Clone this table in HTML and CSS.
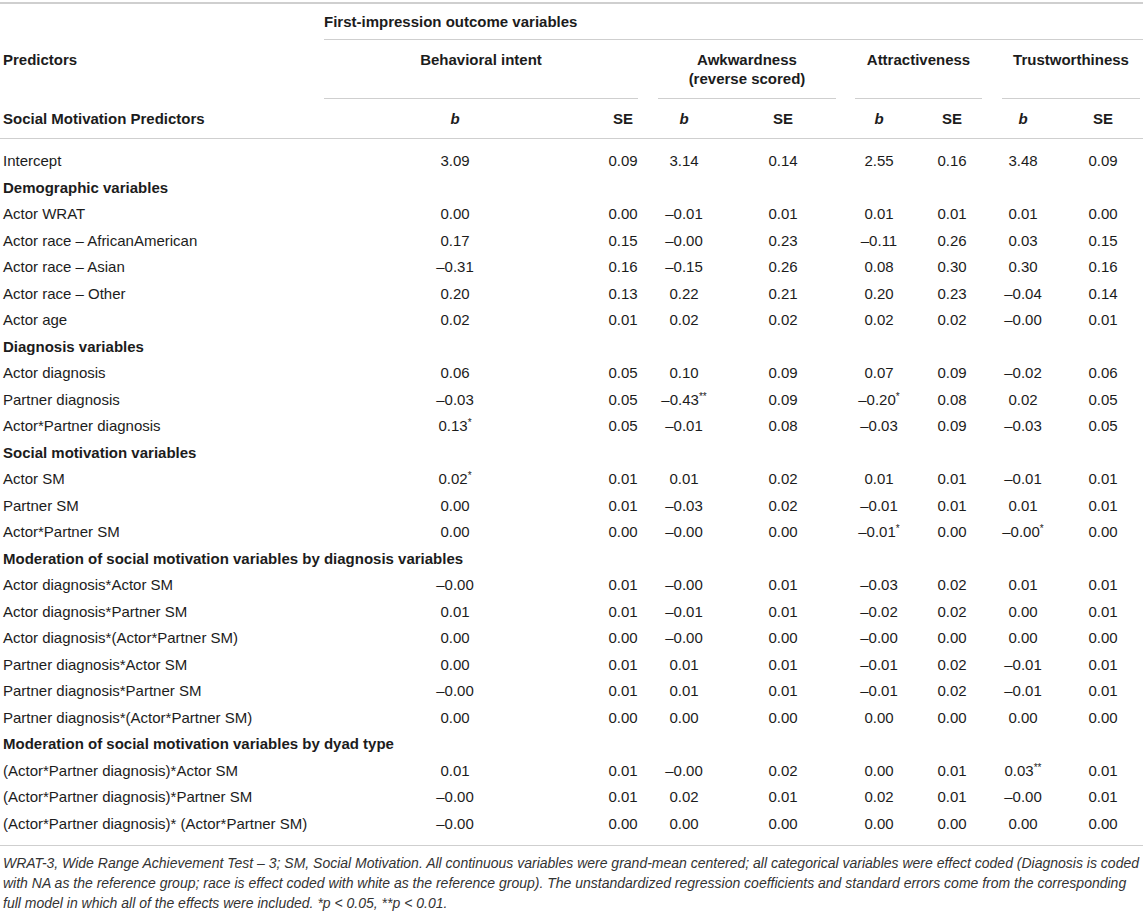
FILE: index.html
```html
<!DOCTYPE html>
<html lang="en">
<head>
<meta charset="utf-8">
<title>First-impression outcome variables</title>
<link rel="stylesheet" href="styles.css">
</head>
<body>
<div class="wrap">
<table class="tbl">
  <colgroup>
    <col class="w0"><col class="w1"><col class="w2"><col class="w3"><col class="w4"><col class="w5"><col class="w6"><col class="w7"><col class="w8">
  </colgroup>
  <thead>
    <tr class="h1">
      <th class="lab"></th>
      <th class="outcome" colspan="8">First-impression outcome variables</th>
    </tr>
    <tr class="h2">
      <th class="lab top">Predictors</th>
      <th colspan="2" class="grp"><div class="gl g1">Behavioral intent</div></th>
      <th colspan="2" class="grp"><div class="gl g2">Awkwardness<br>(reverse scored)</div></th>
      <th colspan="2" class="grp"><div class="gl g3">Attractiveness</div></th>
      <th colspan="2" class="grp"><div class="gl g4">Trustworthiness</div></th>
    </tr>
    <tr class="h3">
      <th class="lab">Social Motivation Predictors</th>
      <th class="c1"><i>b</i></th><th class="c2">SE</th>
      <th class="c3"><i>b</i></th><th class="c4">SE</th>
      <th class="c5"><i>b</i></th><th class="c6">SE</th>
      <th class="c7"><i>b</i></th><th class="c8">SE</th>
    </tr>
  </thead>
  <tbody>
    <tr class="first"><td class="lab">Intercept</td><td class="c1">3.09</td><td class="c2">0.09</td><td class="c3">3.14</td><td class="c4">0.14</td><td class="c5">2.55</td><td class="c6">0.16</td><td class="c7">3.48</td><td class="c8">0.09</td></tr>
    <tr class="sec"><td colspan="9" class="lab">Demographic variables</td></tr>
    <tr><td class="lab">Actor WRAT</td><td class="c1">0.00</td><td class="c2">0.00</td><td class="c3">–0.01</td><td class="c4">0.01</td><td class="c5">0.01</td><td class="c6">0.01</td><td class="c7">0.01</td><td class="c8">0.00</td></tr>
    <tr><td class="lab">Actor race – AfricanAmerican</td><td class="c1">0.17</td><td class="c2">0.15</td><td class="c3">–0.00</td><td class="c4">0.23</td><td class="c5">–0.11</td><td class="c6">0.26</td><td class="c7">0.03</td><td class="c8">0.15</td></tr>
    <tr><td class="lab">Actor race – Asian</td><td class="c1">–0.31</td><td class="c2">0.16</td><td class="c3">–0.15</td><td class="c4">0.26</td><td class="c5">0.08</td><td class="c6">0.30</td><td class="c7">0.30</td><td class="c8">0.16</td></tr>
    <tr><td class="lab">Actor race – Other</td><td class="c1">0.20</td><td class="c2">0.13</td><td class="c3">0.22</td><td class="c4">0.21</td><td class="c5">0.20</td><td class="c6">0.23</td><td class="c7">–0.04</td><td class="c8">0.14</td></tr>
    <tr><td class="lab">Actor age</td><td class="c1">0.02</td><td class="c2">0.01</td><td class="c3">0.02</td><td class="c4">0.02</td><td class="c5">0.02</td><td class="c6">0.02</td><td class="c7">–0.00</td><td class="c8">0.01</td></tr>
    <tr class="sec"><td colspan="9" class="lab">Diagnosis variables</td></tr>
    <tr><td class="lab">Actor diagnosis</td><td class="c1">0.06</td><td class="c2">0.05</td><td class="c3">0.10</td><td class="c4">0.09</td><td class="c5">0.07</td><td class="c6">0.09</td><td class="c7">–0.02</td><td class="c8">0.06</td></tr>
    <tr><td class="lab">Partner diagnosis</td><td class="c1">–0.03</td><td class="c2">0.05</td><td class="c3">–0.43<span class="st">**</span></td><td class="c4">0.09</td><td class="c5">–0.20<span class="st">*</span></td><td class="c6">0.08</td><td class="c7">0.02</td><td class="c8">0.05</td></tr>
    <tr><td class="lab">Actor*Partner diagnosis</td><td class="c1">0.13<span class="st">*</span></td><td class="c2">0.05</td><td class="c3">–0.01</td><td class="c4">0.08</td><td class="c5">–0.03</td><td class="c6">0.09</td><td class="c7">–0.03</td><td class="c8">0.05</td></tr>
    <tr class="sec"><td colspan="9" class="lab">Social motivation variables</td></tr>
    <tr><td class="lab">Actor SM</td><td class="c1">0.02<span class="st">*</span></td><td class="c2">0.01</td><td class="c3">0.01</td><td class="c4">0.02</td><td class="c5">0.01</td><td class="c6">0.01</td><td class="c7">–0.01</td><td class="c8">0.01</td></tr>
    <tr><td class="lab">Partner SM</td><td class="c1">0.00</td><td class="c2">0.01</td><td class="c3">–0.03</td><td class="c4">0.02</td><td class="c5">–0.01</td><td class="c6">0.01</td><td class="c7">0.01</td><td class="c8">0.01</td></tr>
    <tr><td class="lab">Actor*Partner SM</td><td class="c1">0.00</td><td class="c2">0.00</td><td class="c3">–0.00</td><td class="c4">0.00</td><td class="c5">–0.01<span class="st">*</span></td><td class="c6">0.00</td><td class="c7">–0.00<span class="st">*</span></td><td class="c8">0.00</td></tr>
    <tr class="sec"><td colspan="9" class="lab">Moderation of social motivation variables by diagnosis variables</td></tr>
    <tr><td class="lab">Actor diagnosis*Actor SM</td><td class="c1">–0.00</td><td class="c2">0.01</td><td class="c3">–0.00</td><td class="c4">0.01</td><td class="c5">–0.03</td><td class="c6">0.02</td><td class="c7">0.01</td><td class="c8">0.01</td></tr>
    <tr><td class="lab">Actor diagnosis*Partner SM</td><td class="c1">0.01</td><td class="c2">0.01</td><td class="c3">–0.01</td><td class="c4">0.01</td><td class="c5">–0.02</td><td class="c6">0.02</td><td class="c7">0.00</td><td class="c8">0.01</td></tr>
    <tr><td class="lab">Actor diagnosis*(Actor*Partner SM)</td><td class="c1">0.00</td><td class="c2">0.00</td><td class="c3">–0.00</td><td class="c4">0.00</td><td class="c5">–0.00</td><td class="c6">0.00</td><td class="c7">0.00</td><td class="c8">0.00</td></tr>
    <tr><td class="lab">Partner diagnosis*Actor SM</td><td class="c1">0.00</td><td class="c2">0.01</td><td class="c3">0.01</td><td class="c4">0.01</td><td class="c5">–0.01</td><td class="c6">0.02</td><td class="c7">–0.01</td><td class="c8">0.01</td></tr>
    <tr><td class="lab">Partner diagnosis*Partner SM</td><td class="c1">–0.00</td><td class="c2">0.01</td><td class="c3">0.01</td><td class="c4">0.01</td><td class="c5">–0.01</td><td class="c6">0.02</td><td class="c7">–0.01</td><td class="c8">0.01</td></tr>
    <tr><td class="lab">Partner diagnosis*(Actor*Partner SM)</td><td class="c1">0.00</td><td class="c2">0.00</td><td class="c3">0.00</td><td class="c4">0.00</td><td class="c5">0.00</td><td class="c6">0.00</td><td class="c7">0.00</td><td class="c8">0.00</td></tr>
    <tr class="sec"><td colspan="9" class="lab">Moderation of social motivation variables by dyad type</td></tr>
    <tr><td class="lab">(Actor*Partner diagnosis)*Actor SM</td><td class="c1">0.01</td><td class="c2">0.01</td><td class="c3">–0.00</td><td class="c4">0.02</td><td class="c5">0.00</td><td class="c6">0.01</td><td class="c7">0.03<span class="st">**</span></td><td class="c8">0.01</td></tr>
    <tr><td class="lab">(Actor*Partner diagnosis)*Partner SM</td><td class="c1">–0.00</td><td class="c2">0.01</td><td class="c3">0.02</td><td class="c4">0.01</td><td class="c5">0.02</td><td class="c6">0.01</td><td class="c7">–0.00</td><td class="c8">0.01</td></tr>
    <tr class="last"><td class="lab">(Actor*Partner diagnosis)* (Actor*Partner SM)</td><td class="c1">–0.00</td><td class="c2">0.00</td><td class="c3">0.00</td><td class="c4">0.00</td><td class="c5">0.00</td><td class="c6">0.00</td><td class="c7">0.00</td><td class="c8">0.00</td></tr>
  </tbody>
</table>
<p class="note">WRAT-3, Wide Range Achievement Test – 3; SM, Social Motivation. All continuous variables were grand-mean centered; all categorical variables were effect coded (Diagnosis is coded with NA as the reference group; race is effect coded with white as the reference group). The unstandardized regression coefficients and standard errors come from the corresponding full model in which all of the effects were included. *p &lt; 0.05, **p &lt; 0.01.</p>
</div>
</body>
</html>
```
FILE: styles.css
```css
html, body {
  margin: 0;
  padding: 0;
  background: #ffffff;
}
body {
  font-family: "Liberation Sans", Arial, sans-serif;
  font-size: 15px;
  color: #1c1c1c;
}
.wrap {
  width: 1143px;
  padding-top: 2px;
}
.tbl {
  width: 1143px;
  table-layout: fixed;
  border-collapse: separate;
  border-spacing: 0;
  border-top: 2px solid #cfcfcf;
}
.w0 { width: 324px; }
.w1 { width: 216px; }
.w2 { width: 108px; }
.w3 { width: 82px; }
.w4 { width: 110px; }
.w5 { width: 75px; }
.w6 { width: 75px; }
.w7 { width: 70px; }
.w8 { width: 83px; }

th, td {
  padding: 0;
  white-space: nowrap;
}
th {
  font-weight: bold;
}
th i {
  font-style: italic;
}
.lab {
  text-align: left;
  padding-left: 3px;
}

/* header row 1 */
.h1 th {
  height: 35px;
  line-height: 35px;
  vertical-align: middle;
}
.h1 .outcome {
  text-align: left;
  padding-left: 0;
  border-bottom: 1px solid #cfcfcf;
}

/* header row 2 */
.h2 th {
  vertical-align: top;
  line-height: 19px;
}
.h2 .top {
  padding-top: 10px;
}
.grp {
  text-align: center;
}
.gl {
  height: 38px;
  padding-top: 10px;
  padding-bottom: 10px;
  border-bottom: 1px solid #cfcfcf;
}
.g1 { margin-right: 10px; }
.g2 { margin-left: 10px; margin-right: 4px; }
.g3 { margin-left: 15px; margin-right: 8px; }
.g4 { margin-left: 12px; margin-right: 3px; }

/* header row 3 */
.h3 th {
  height: 39px;
  line-height: 39px;
  border-bottom: 1px solid #cfcfcf;
  text-align: center;
}
.h3 th.lab {
  text-align: left;
}

/* body */
td {
  line-height: 26.5px;
  text-align: center;
}
td.lab {
  text-align: left;
}
.first td {
  padding-top: 9px;
}
.last td {
  padding-bottom: 8px;
  border-bottom: 1px solid #cfcfcf;
}
.sec td {
  font-weight: bold;
}
.st {
  font-size: 10px;
  vertical-align: top;
  line-height: 20px;
}

/* column centring */
.c1 { padding-left: 46px; }
.c2 { padding-left: 58px; }
.c3 { padding-right: 10px; }
.c4 { padding-right: 4px; }
.c5 { padding-left: 3px; }
.c6 { padding-right: 1px; }
.c7 { padding-right: 4px; }
.c8 { padding-left: 3px; }

.note {
  margin: 0;
  padding: 7px 0 0 3px;
  font-style: italic;
  font-size: 14px;
  line-height: 20px;
  color: #333333;
}
```
